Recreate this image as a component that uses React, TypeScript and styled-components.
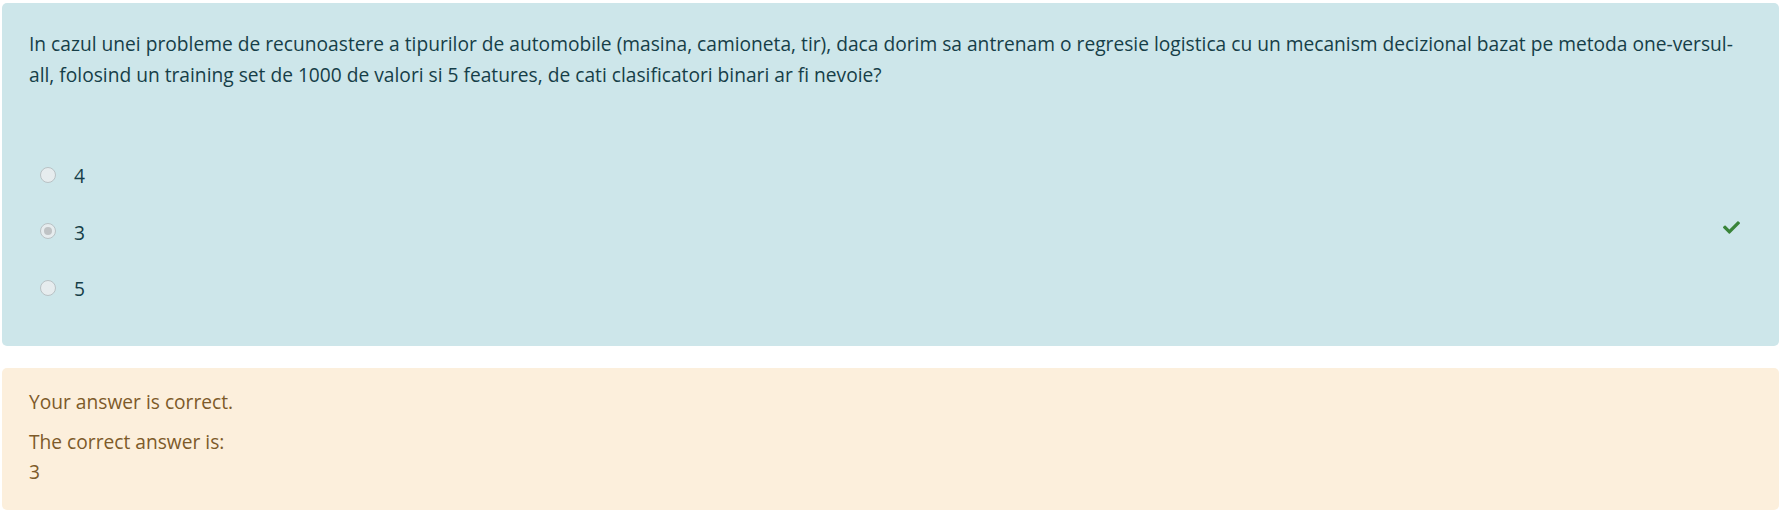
import React from 'react';
import styled, { createGlobalStyle } from 'styled-components';
import { FaCheck } from 'react-icons/fa';

const GlobalStyle = createGlobalStyle`
  html, body {
    margin: 0;
    padding: 0;
    background: #ffffff;
  }
  body {
    font-family: "Open Sans", "Noto Sans", sans-serif;
    font-size: 19.2px;
    line-height: 30px;
  }
`;

const Page = styled.div`
  padding: 3px 3px 0 2px;
  display: flex;
  flex-direction: column;
  gap: 22px;
`;

const Formulation = styled.div`
  background: #cde6ea;
  color: #163e48;
  border-radius: 5px;
  padding: 25px 39px 29px 27px;
  height: 343px;
  box-sizing: border-box;
  line-height: 31px;
`;

const QuestionText = styled.div``;

const Answers = styled.div`
  margin-top: 57.5px;
  display: flex;
  flex-direction: column;
`;

const AnswerRow = styled.div`
  display: flex;
  align-items: center;
  height: 56.5px;
  padding-left: 11px;
`;

const Radio = styled.span<{ $checked?: boolean }>`
  width: 16px;
  height: 16px;
  box-sizing: border-box;
  border-radius: 50%;
  border: 1.5px solid #b9c2c5;
  background: #e6ecee;
  display: flex;
  align-items: center;
  justify-content: center;
  margin-bottom: 2px;

  &::after {
    content: '';
    display: ${(p) => (p.$checked ? 'block' : 'none')};
    width: 8px;
    height: 8px;
    border-radius: 50%;
    background: #bfc3c5;
  }
`;

const AnswerLabel = styled.span`
  margin-left: 18px;
`;

const Mark = styled.span`
  margin-left: auto;
  color: #398439;
  display: flex;
  margin-bottom: 9px;
`;

const Outcome = styled.div`
  background: #fcefdc;
  color: #7d5a29;
  border-radius: 5px;
  padding: 18.5px 27px 23.5px;
`;

const Feedback = styled.div`
  margin-bottom: 10px;
`;

const answers = [
  { value: '4', checked: false, correct: false },
  { value: '3', checked: true, correct: true },
  { value: '5', checked: false, correct: false },
];

const App: React.FunctionComponent = () => (
  <>
    <GlobalStyle />
    <Page>
      <Formulation>
        <QuestionText>
          In cazul unei probleme de recunoastere a tipurilor de automobile (masina, camioneta, tir), daca dorim sa
          antrenam o regresie logistica cu un mecanism decizional bazat pe metoda one-versul-all, folosind un training
          set de 1000 de valori si 5 features, de cati clasificatori binari ar fi nevoie?
        </QuestionText>
        <Answers>
          {answers.map((a) => (
            <AnswerRow key={a.value}>
              <Radio $checked={a.checked} />
              <AnswerLabel>{a.value}</AnswerLabel>
              {a.correct && (
                <Mark>
                  <FaCheck size={17} />
                </Mark>
              )}
            </AnswerRow>
          ))}
        </Answers>
      </Formulation>
      <Outcome>
        <Feedback>Your answer is correct.</Feedback>
        <div>The correct answer is:</div>
        <div>3</div>
      </Outcome>
    </Page>
  </>
);

export default App;
